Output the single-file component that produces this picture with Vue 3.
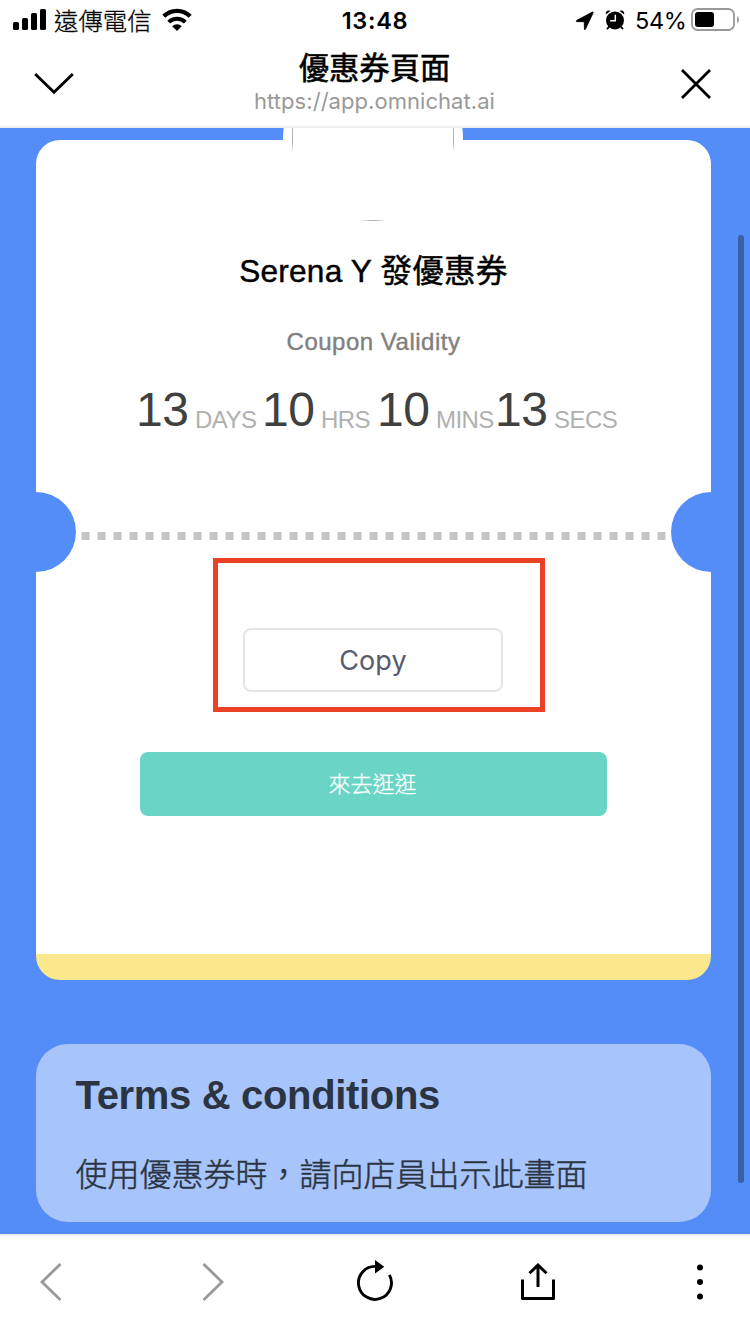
<script setup>
const countdown = [
  { key: 'days', value: '13', label: 'DAYS' },
  { key: 'hrs', value: '10', label: 'HRS' },
  { key: 'mins', value: '10', label: 'MINS' },
  { key: 'secs', value: '13', label: 'SECS' },
]
</script>

<template>
  <div class="screen">
    <header class="top">
      <div class="status">
        <div class="status-left">
          <svg class="signal" width="34" height="22" viewBox="0 0 34 22">
            <rect x="0" y="14" width="6" height="8" rx="1.6" />
            <rect x="9" y="10" width="6" height="12" rx="1.6" />
            <rect x="18" y="5" width="6" height="17" rx="1.6" />
            <rect x="27" y="1" width="6" height="21" rx="1.6" />
          </svg>
          <span class="carrier">遠傳電信</span>
          <svg class="wifi" width="30" height="22" viewBox="0 0 30 22">
            <path d="M1.8 7.3A18.8 18.8 0 0 1 28.2 7.3" fill="none" stroke="#000" stroke-width="4.2" />
            <path d="M6.7 13.2A11.6 11.6 0 0 1 23.3 13.2" fill="none" stroke="#000" stroke-width="4" />
            <path d="M10.2 17.3A6.7 6.7 0 0 1 19.8 17.3L15 22Z" />
          </svg>
        </div>
        <span class="clock">13:48</span>
        <div class="status-right">
          <svg class="location" width="18" height="18" viewBox="0 0 18 18">
            <path d="M17.2 .6 9.4 17.2C9 17.9 8.4 17.7 8.4 17L8.3 9.7.8 9.6C.1 9.5-.1 8.9.6 8.5L16.4.1C17.1-.2 17.5-.1 17.2.6Z" stroke="#000" stroke-width=".9" stroke-linejoin="round" />
          </svg>
          <svg class="alarm" width="20" height="20" viewBox="0 0 20 20">
            <circle cx="10" cy="10.4" r="9" />
            <path d="M.8 4.4C.2 1.4 3 -.4 5.4 1Z M19.2 4.4C19.8 1.4 17 -.4 14.6 1Z" />
            <path d="M4.3 16.5 2 19.2M15.7 16.5 18 19.2" stroke="#000" stroke-width="1.8" />
            <path d="M10.3 4.8V10.7H5.2" fill="none" stroke="#fff" stroke-width="1.5" />
          </svg>
          <span class="percent">54%</span>
          <svg class="battery" width="49" height="24" viewBox="0 0 49 24">
            <rect x="1" y="1" width="42" height="21" rx="5.5" fill="none" stroke="#999" stroke-width="1.8" />
            <rect x="4" y="4" width="19" height="15" rx="3" />
            <path d="M46 8Q48 9 48 11.5T46 15Z" fill="#999" />
          </svg>
        </div>
      </div>
      <div class="nav">
        <svg class="chevron" width="40" height="24" viewBox="0 0 40 24">
          <path d="M1.2 2 20 20.2 38.8 2" fill="none" stroke="#000" stroke-width="2.9" />
        </svg>
        <div class="heading">
          <div class="page-title">優惠券頁面</div>
          <div class="url">https://app.omnichat.ai</div>
        </div>
        <svg class="close" width="32" height="32" viewBox="0 0 32 32">
          <path d="M2 2 30 30M30 2 2 30" stroke="#000" stroke-width="2.8" />
        </svg>
      </div>
    </header>

    <main class="page">
      <section class="card">
        <div class="avatar">
          <i class="edge left"></i><i class="edge right"></i><i class="edge bottom"></i>
        </div>
        <h1 class="coupon">Serena Y 發優惠券</h1>
        <p class="validity">Coupon Validity</p>
        <div class="countdown">
          <div v-for="u in countdown" :key="u.key" class="unit" :class="u.key">
            <span class="value">{{ u.value }}</span><span class="label">{{ u.label }}</span>
          </div>
        </div>
        <div class="divider">
          <i class="notch notch-left"></i>
          <i class="dots"></i>
          <i class="notch notch-right"></i>
        </div>
        <button class="copy">Copy</button>
        <button class="visit">來去逛逛</button>
        <div class="highlight"></div>
      </section>

      <section class="terms">
        <h2>Terms &amp; conditions</h2>
        <p>使用優惠券時，請向店員出示此畫面</p>
      </section>
      <div class="scrollbar"></div>
    </main>

    <footer class="toolbar">
      <svg class="back" width="22" height="38" viewBox="0 0 22 38">
        <path d="M20.5 1 2 19 20.5 37" fill="none" stroke="#999" stroke-width="2.8" />
      </svg>
      <svg class="forward" width="22" height="38" viewBox="0 0 22 38">
        <path d="M1.5 1 20 19 1.5 37" fill="none" stroke="#999" stroke-width="2.8" />
      </svg>
      <svg class="reload" width="38" height="42" viewBox="0 0 38 42">
        <path d="M19 6.4A16.5 16.5 0 1 0 33.4 14.9" fill="none" stroke="#000" stroke-width="2.9" />
        <path d="M19 0 28.3 6.8 19 13.6Z" />
      </svg>
      <svg class="share" width="36" height="38" viewBox="0 0 36 38">
        <path d="M2.5 16.5V35.5H33.5V16.5" fill="none" stroke="#000" stroke-width="3" stroke-linejoin="round" />
        <path d="M18 24V2M9.5 10.3 18 2 26.5 10.3" fill="none" stroke="#000" stroke-width="3" />
      </svg>
      <svg class="more" width="8" height="36" viewBox="0 0 8 36">
        <circle cx="4" cy="3.5" r="3" /><circle cx="4" cy="18" r="3" /><circle cx="4" cy="32.5" r="3" />
      </svg>
    </footer>
  </div>
</template>

<style>
body { margin: 0; overflow: hidden; }
</style>

<style scoped>
.screen {
  width: 750px;
  height: 1334px;
  display: flex;
  flex-direction: column;
  background: #fff;
  overflow: hidden;
  font-family: "Liberation Sans", "Noto Sans CJK TC", sans-serif;
}
.screen * { box-sizing: border-box; }
svg { display: block; flex: none; overflow: visible; }
h1, h2, p { margin: 0; font-weight: 400; }

.top { height: 128px; flex: none; border-bottom: 2px solid #eee; }
.status {
  height: 40px;
  display: grid;
  grid-template-columns: 1fr 70px 1fr;
  font-family: Inter, "Noto Sans CJK TC", sans-serif;
  line-height: 42px;
  white-space: nowrap;
}
.status-left { display: flex; padding-left: 13px; }
.signal { margin-top: 8px; }
.carrier { width: 100px; margin-left: 7px; font-size: 24.4px; font-weight: 300; -webkit-text-stroke: .3px #000; }
.wifi { margin: 9px 0 0 8px; }
.clock { font-size: 23.5px; font-weight: 600; text-align: center; letter-spacing: .7px; }
.status-right { display: flex; justify-content: flex-end; padding-right: 10px; }
.location { margin: 12px 11px 0 0; }
.alarm { margin: 10px 10px 0 0; }
.percent { width: 51px; font-size: 23.5px; letter-spacing: -.3px; }
.battery { margin: 8px 0 0 5px; }

.nav { height: 86px; display: flex; justify-content: space-between; padding: 0 38px 0 34px; }
.chevron { margin-top: 32px; }
.close { margin-top: 28px; }
.heading { position: relative; left: -2.5px; text-align: center; font-family: Inter, "Noto Sans CJK TC", sans-serif; white-space: nowrap; }
.page-title { margin-top: 10px; height: 36px; line-height: 36px; font-size: 30.3px; -webkit-text-stroke: .6px #000; }
.url { height: 30px; line-height: 30px; font-size: 22px; color: #999; letter-spacing: .05px; }

.page { position: relative; height: 1106px; flex: none; padding: 12px 39px 0 36px; background: #548df7; overflow: hidden; }
.card {
  position: relative;
  width: 675px;
  height: 840px;
  display: flex;
  flex-direction: column;
  align-items: center;
  border-radius: 24px;
  background: linear-gradient(#fff 814px, #fbe88c 814px);
}
.avatar { position: absolute; left: 247px; top: -91px; width: 180px; height: 180px; border-radius: 50%; background: #fff; }
.edge { position: absolute; }
.edge.left, .edge.right { top: 79px; width: 1px; height: 24px; background: linear-gradient(#bbb, #aaa 60%, #fff); }
.edge.left { left: 9px; }
.edge.right { left: 170px; }
.edge.bottom { left: 77px; top: 171px; width: 26px; height: 1px; background: linear-gradient(90deg, #fff, #b4b4b4 40%, #b4b4b4 60%, #fff); }
.coupon { position: relative; margin-top: 110px; height: 42px; line-height: 42px; font-size: 31.6px; letter-spacing: .2px; -webkit-text-stroke: .45px #000; }
.validity { margin-top: 34px; height: 32px; line-height: 32px; font-size: 24px; letter-spacing: .5px; color: #808080; -webkit-text-stroke: .4px #808080; }
.countdown { display: flex; width: 481px; height: 60px; margin: 22px 0 0 6px; }
.unit { display: flex; align-items: baseline; white-space: nowrap; line-height: 60px; }
.days { width: 126px; }
.hrs { width: 115px; }
.mins { width: 118px; }
.secs { width: 122px; }
.value { width: 59px; flex: none; font-size: 48px; color: #404040; letter-spacing: -.5px; }
.label { position: relative; top: 2px; font-size: 24px; line-height: 30px; color: #b0b0b0; letter-spacing: -.55px; }
.divider { display: flex; width: 675px; height: 80px; margin-top: 52px; justify-content: space-between; }
.notch { width: 40px; height: 80px; background: #548df7; }
.notch-left { border-radius: 0 40px 40px 0; }
.notch-right { border-radius: 40px 0 0 40px; }
.dots { width: 585px; height: 8px; margin-top: 40px; background: repeating-linear-gradient(90deg, #e2e2e2 0 1px, #c4c4c4 1px 8px, #e2e2e2 8px 9px, #fff 9px 16px); }
.copy, .visit { display: block; border-radius: 8px; flex: none; }
.copy { width: 260px; height: 64px; margin: 56px 0 0 -1px; padding: 2px 0 0; border: 2px solid #e5e5e5; background: #fff; color: #585b6b; font: 27px/58px Inter, sans-serif; letter-spacing: .1px; }
.visit { width: 467px; height: 64px; margin-top: 60px; padding: 0 2px 3px 0; border: 0; background: #6ad5c5; color: #fff; font: 300 22px/61px "Noto Sans CJK TC", sans-serif; -webkit-text-stroke: .3px #fff; }
.highlight { position: absolute; left: 176.5px; top: 417.5px; width: 332px; height: 154px; border: 5px solid #ec4125; }

.terms { width: 675px; height: 178px; margin-top: 64px; padding: 26px 40px 0 39.5px; border-radius: 32px; background: #a7c4fb; color: #2b3442; white-space: nowrap; }
.terms h2 { height: 50px; line-height: 50px; font-size: 40px; font-weight: 700; letter-spacing: -.33px; }
.terms p { margin-top: 30px; height: 50px; line-height: 51px; font-size: 32px; font-weight: 300; -webkit-text-stroke: .5px #2b3442; }
.scrollbar { position: absolute; left: 738px; top: 107px; width: 6px; height: 948px; border-radius: 3px; background: #3a5fa3; }

.toolbar { height: 100px; flex: none; display: flex; align-items: flex-start; border-top: 2px solid #eee; background: #fff; }
.back { margin: 27px 0 0 40px; }
.forward { margin: 27px 0 0 140px; }
.reload { margin: 24px 0 0 132px; }
.share { margin: 27px 0 0 126px; }
.more { margin: 28px 0 0 140px; }
</style>
